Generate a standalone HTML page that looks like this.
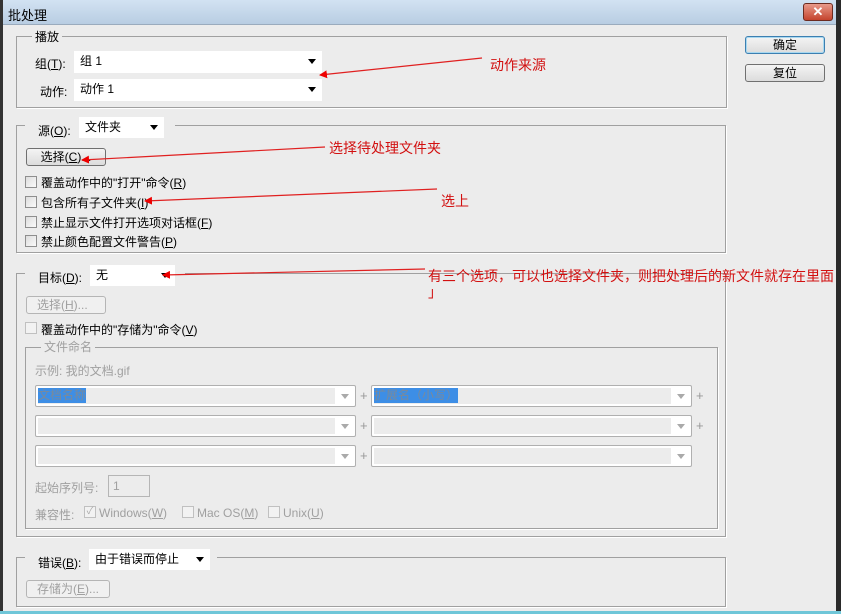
<!DOCTYPE html>
<html><head><meta charset="utf-8"><style>
*{margin:0;padding:0;box-sizing:border-box}
body{width:841px;height:614px;background:#ececec;position:relative;overflow:hidden;font-family:"Liberation Sans","Noto Sans CJK SC",sans-serif;font-size:12px;color:#000}
.a{position:absolute;white-space:nowrap}
.grp{position:absolute;border:1px solid #a0a0a0;box-shadow:1px 1px 0 #fff}
.leg{position:absolute;background:#ececec;padding:0 3px;line-height:14px}
.sel{position:absolute;background:#fff;line-height:20px;padding-left:6px}
.sel:after{content:"";position:absolute;right:6px;top:8px;border:4px solid transparent;border-top:5px solid #000}
.dsel{position:absolute;border:1px solid #b0b0b0;background:#fff;border-radius:2px}
.dsel i{position:absolute;left:2px;top:2px;bottom:2px;right:20px;background:#ececec}
.dsel:after{content:"";position:absolute;right:6px;top:8px;border:4px solid transparent;border-top:5px solid #aaa}
.btn{position:absolute;border:1px solid #707070;border-radius:3px;background:linear-gradient(#f4f4f4,#dcdcdc);text-align:center;line-height:16px}
.dbtn{position:absolute;border:1px solid #b5b5b5;border-radius:3px;background:#f0f0f0;color:#a0a0a0;padding-left:10px;line-height:16px}
.cb{position:absolute;width:12px;height:12px;border:1px solid #8e8e8e;background:linear-gradient(135deg,#ddd,#fafafa)}
.cbd{position:absolute;width:12px;height:12px;border:1px solid #c0c0c0;background:#f2f2f2}
.g{color:#a0a0a0}
.r{color:#d21010;font-size:14px}
.plus{position:absolute;color:#999;font-size:13px}
</style></head><body>
<div class="a" style="left:0;top:0;width:841px;height:25px;background:linear-gradient(#d2e2f2,#b8cde2);border-bottom:1px solid #9aabbd"></div>
<div class="a" style="left:0;top:0;width:3px;height:614px;background:#333"></div>
<div class="a" style="left:836px;top:0;width:5px;height:614px;background:#2a2a2a"></div>
<div class="a" style="left:8px;top:5px;font-size:13px">批处理</div>
<div class="a" style="left:803px;top:3px;width:30px;height:18px;border:1px solid #6b2b20;border-radius:3px;background:linear-gradient(#e89a8a,#c4442e);color:#fff;text-align:center;font-weight:bold;line-height:16px;font-size:13px">✕</div>
<div class="a" style="left:0;top:611px;width:841px;height:3px;background:#6fc6d8"></div>

<div class="btn" style="left:745px;top:36px;width:80px;height:18px;border-color:#3c7fb1;box-shadow:inset 0 0 0 1px #a8d8f0">确定</div>
<div class="btn" style="left:745px;top:64px;width:80px;height:18px">复位</div>

<div class="grp" style="left:16px;top:36px;width:711px;height:72px"></div>
<div class="leg" style="left:32px;top:30px">播放</div>
<div class="a" style="left:35px;top:55px">组(<u>T</u>):</div>
<div class="sel" style="left:74px;top:51px;width:248px;height:22px">组 1</div>
<div class="a" style="left:40px;top:83px">动作:</div>
<div class="sel" style="left:74px;top:79px;width:248px;height:22px">动作 1</div>

<div class="grp" style="left:16px;top:125px;width:710px;height:128px"></div>
<div class="leg" style="left:25px;top:119px;width:150px;height:22px"></div>
<div class="a" style="left:38px;top:122px">源(<u>O</u>):</div>
<div class="sel" style="left:79px;top:117px;width:85px;height:21px">文件夹</div>
<div class="btn" style="left:26px;top:148px;width:80px;height:18px">选择(<u>C</u>)...</div>
<div class="cb" style="left:25px;top:176px"></div><div class="a" style="left:41px;top:174px">覆盖动作中的"打开"命令(<u>R</u>)</div>
<div class="cb" style="left:25px;top:196px"></div><div class="a" style="left:41px;top:194px">包含所有子文件夹(<u>I</u>)</div>
<div class="cb" style="left:25px;top:216px"></div><div class="a" style="left:41px;top:214px">禁止显示文件打开选项对话框(<u>F</u>)</div>
<div class="cb" style="left:25px;top:235px"></div><div class="a" style="left:41px;top:233px">禁止颜色配置文件警告(<u>P</u>)</div>

<div class="grp" style="left:16px;top:273px;width:710px;height:264px"></div>
<div class="leg" style="left:25px;top:266px;width:160px;height:22px"></div>
<div class="a" style="left:38px;top:269px">目标(<u>D</u>):</div>
<div class="sel" style="left:90px;top:265px;width:85px;height:21px">无</div>
<div class="dbtn" style="left:26px;top:296px;width:80px;height:18px">选择(<u>H</u>)...</div>
<div class="cbd" style="left:25px;top:322px"></div><div class="a" style="left:41px;top:321px">覆盖动作中的"存储为"命令(<u>V</u>)</div>
<div class="grp" style="left:25px;top:347px;width:693px;height:182px"></div>
<div class="leg g" style="left:41px;top:340px">文件命名</div>
<div class="a g" style="left:35px;top:362px">示例: 我的文档.gif</div>
<div class="dsel" style="left:35px;top:385px;width:321px;height:22px"><i></i></div>
<div class="a" style="left:38px;top:388px;background:#3d8ee6;color:#7a8a9a;line-height:15px">文档名称</div>
<div class="plus" style="left:360px;top:388px">+</div>
<div class="dsel" style="left:371px;top:385px;width:321px;height:22px"><i></i></div>
<div class="a" style="left:374px;top:388px;background:#3d8ee6;color:#7a8a9a;line-height:15px">扩展名（小写）</div>
<div class="plus" style="left:696px;top:388px">+</div>
<div class="dsel" style="left:35px;top:415px;width:321px;height:22px"><i></i></div>
<div class="plus" style="left:360px;top:418px">+</div>
<div class="dsel" style="left:371px;top:415px;width:321px;height:22px"><i></i></div>
<div class="plus" style="left:696px;top:418px">+</div>
<div class="dsel" style="left:35px;top:445px;width:321px;height:22px"><i></i></div>
<div class="plus" style="left:360px;top:448px">+</div>
<div class="dsel" style="left:371px;top:445px;width:321px;height:22px"><i></i></div>
<div class="a g" style="left:35px;top:479px">起始序列号:</div>
<div class="a g" style="left:108px;top:475px;width:42px;height:22px;border:1px solid #b5b5b5;padding-left:4px;line-height:20px">1</div>
<div class="a g" style="left:35px;top:506px">兼容性:</div>
<div class="cbd" style="left:84px;top:506px;color:#aaa;font-size:10px;line-height:10px;text-align:center">✓</div><div class="a g" style="left:99px;top:506px">Windows(<u>W</u>)</div>
<div class="cbd" style="left:182px;top:506px"></div><div class="a g" style="left:197px;top:506px">Mac OS(<u>M</u>)</div>
<div class="cbd" style="left:268px;top:506px"></div><div class="a g" style="left:283px;top:506px">Unix(<u>U</u>)</div>

<div class="grp" style="left:16px;top:557px;width:710px;height:50px"></div>
<div class="leg" style="left:25px;top:548px;width:192px;height:24px"></div>
<div class="a" style="left:38px;top:554px">错误(<u>B</u>):</div>
<div class="sel" style="left:89px;top:549px;width:121px;height:21px">由于错误而停止</div>
<div class="dbtn" style="left:26px;top:580px;width:84px;height:18px">存储为(<u>E</u>)...</div>

<svg class="a" style="left:0;top:0" width="841" height="614">
<defs><marker id="m" markerWidth="8" markerHeight="8" refX="7" refY="4" orient="auto" markerUnits="userSpaceOnUse"><path d="M0,0 L8,4 L0,8z" fill="#e00"/></marker></defs>
<g stroke="#e02020" stroke-width="1.2" fill="none" marker-end="url(#m)">
<line x1="482" y1="58" x2="320" y2="75"/>
<line x1="325" y1="147" x2="82" y2="160"/>
<line x1="437" y1="189" x2="145" y2="201"/>
<line x1="425" y1="269" x2="163" y2="275"/>
</g></svg>
<div class="a r" style="left:490px;top:55px">动作来源</div>
<div class="a r" style="left:329px;top:138px">选择待处理文件夹</div>
<div class="a r" style="left:441px;top:191px">选上</div>
<div class="a r" style="left:428px;top:266px">有三个选项，可以也选择文件夹，则把处理后的新文件就存在里面</div>
<div class="a r" style="left:428px;top:282px">」</div>
</body></html>
